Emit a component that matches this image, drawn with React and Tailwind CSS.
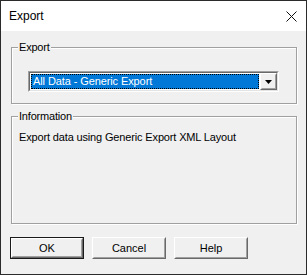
const font = { fontFamily: '"Liberation Sans", Arial, sans-serif' };

const Raised = ({ children, className = "" }) => (
  <div
    className={`flex items-center justify-center bg-[#f0f0f0] border border-t-white border-l-white border-r-[#696969] border-b-[#696969] ${className}`}
  >
    <div className="w-full h-full flex items-center justify-center border border-t-[#f0f0f0] border-l-[#f0f0f0] border-r-[#a0a0a0] border-b-[#a0a0a0]">
      {children}
    </div>
  </div>
);

const GroupBox = ({ label, className = "", children }) => (
  <div
    className={`relative border border-[#a0a0a0] shadow-[inset_1px_1px_0_#ffffff,1px_1px_0_#ffffff] ${className}`}
  >
    <span className="absolute -top-[8px] left-[6px] bg-[#f0f0f0] px-[1px] text-[11px] leading-[14px] tracking-[-0.2px] text-black">
      {label}
    </span>
    {children}
  </div>
);

const Button = ({ label, isDefault }) => (
  <div
    className={`w-[74px] h-[22px] ${
      isDefault ? "border border-[#1a1a1a]" : ""
    }`}
  >
    <Raised className="w-full h-full">
      <span className="text-[11px] leading-none text-black">{label}</span>
    </Raised>
  </div>
);

export default function App() {
  return (
    <div className="w-[308px] h-[276px] bg-white" style={font}>
      <div className="w-[307px] h-[275px] border border-[#2b2b2b] flex flex-col">
        <div className="h-[30px] bg-white flex items-center justify-between pl-[8px] pr-[8px]">
          <span className="text-[12px] text-black">Export</span>
          <svg width="11" height="11" viewBox="0 0 11 11" className="mr-[1px]">
            <path d="M0.5 0.5 L10.5 10.5 M10.5 0.5 L0.5 10.5" stroke="#111" strokeWidth="1" />
          </svg>
        </div>
        <div className="flex-1 bg-[#f0f0f0] pl-[10px] pr-[9px] pt-[16px]">
          <GroupBox label="Export" className="h-[57px] pt-[23px] pl-[16px]">
            <div className="w-[251px] h-[21px] border border-t-[#a0a0a0] border-l-[#a0a0a0] border-r-white border-b-white">
              <div className="w-full h-full flex bg-white border border-t-[#696969] border-l-[#696969] border-r-[#e3e3e3] border-b-[#e3e3e3]">
                <div className="flex-1 p-[1px]">
                  <div className="h-full bg-[#0078d7] outline-1 outline-dotted outline-black -outline-offset-1 flex items-center pl-[2px]">
                    <span className="text-[11px] leading-none tracking-[-0.1px] text-white">All Data - Generic Export</span>
                  </div>
                </div>
                <Raised className="w-[17px] h-full">
                  <svg width="7" height="4" viewBox="0 0 7 4">
                    <path d="M0 0 H7 L3.5 4 Z" fill="#000" />
                  </svg>
                </Raised>
              </div>
            </div>
          </GroupBox>
          <GroupBox label="Information" className="mt-[12px] h-[108px] pt-[13px] pl-[7px]">
            <p className="text-[11px] leading-[14px] tracking-[-0.15px] text-black">
              Export data using Generic Export XML Layout
            </p>
          </GroupBox>
          <div className="flex gap-[8px] mt-[13px] -ml-[1px]">
            <Button label="OK" isDefault />
            <Button label="Cancel" />
            <Button label="Help" />
          </div>
        </div>
      </div>
    </div>
  );
}
